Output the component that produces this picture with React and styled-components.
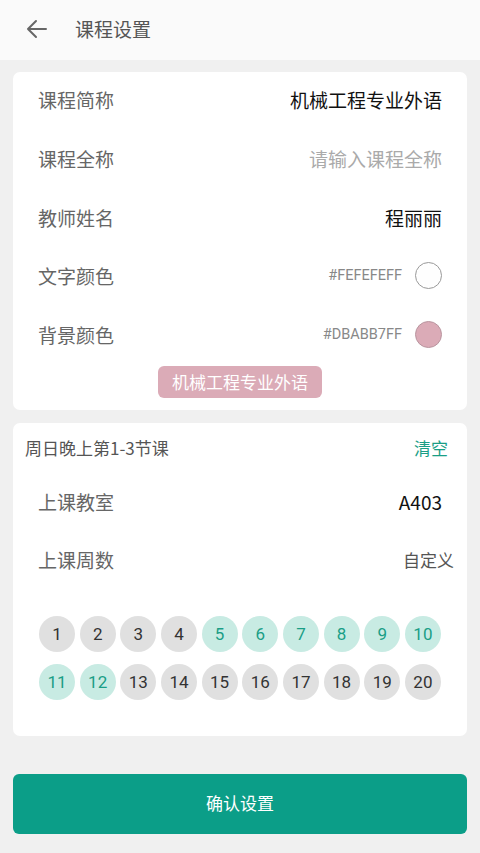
import React from "react";
import styled, { createGlobalStyle } from "styled-components";

const GlobalStyle = createGlobalStyle`
  html, body {
    margin: 0;
    padding: 0;
    background: #f0f0f0;
    font-family: "Noto Sans CJK SC", "Noto Sans", Roboto, sans-serif;
  }
  * { box-sizing: border-box; }
`;

const Page = styled.div`
  width: 480px;
  height: 853px;
  background: #f0f0f0;
  display: flex;
  flex-direction: column;
`;

const Header = styled.div`
  height: 60px;
  background: #fafafa;
  display: flex;
  align-items: center;
  padding: 0 0 3px 25px;
  gap: 26px;
`;

const Title = styled.div`
  font-size: 19px;
  color: #555;
`;

const Card = styled.div`
  margin: ${(p) => p.$margin};
  background: #fff;
  border-radius: 7px;
  padding: ${(p) => p.$padding};
  display: flex;
  flex-direction: column;
`;

const Row = styled.div`
  height: 58.7px;
  display: flex;
  align-items: center;
  justify-content: space-between;
  padding: 0 25px 3px;
`;

const Label = styled.div`
  font-size: 19px;
  color: #666;
`;

const Value = styled.div`
  font-size: ${(p) => p.$size || 19}px;
  color: ${(p) => p.$color || "#111"};
  margin-right: ${(p) => p.$shift || 0}px;
`;

const ColorPick = styled.div`
  display: flex;
  align-items: center;
  gap: 13px;
`;

const Hex = styled.span`
  font-family: Roboto, "Noto Sans", sans-serif;
  font-size: 14.5px;
  color: #888;
`;

const Swatch = styled.span`
  width: 27px;
  height: 27px;
  border-radius: 50%;
  background: ${(p) => p.$color};
  border: 1.5px solid ${(p) => p.$border};
`;

const TagWrap = styled.div`
  display: flex;
  justify-content: center;
  padding: 1px 0 0;
`;

const Tag = styled.div`
  background: #dbabb7;
  color: #fff;
  font-size: 17px;
  border-radius: 6px;
  height: 32px;
  padding: 0 14px 2px;
  display: flex;
  align-items: center;
`;

const SlotHead = styled.div`
  display: flex;
  align-items: center;
  justify-content: space-between;
  height: 50px;
  padding: 0 19px 2px 12px;
`;

const SlotTitle = styled.div`
  font-size: 17px;
  color: #555;
`;

const Clear = styled.div`
  font-size: 17px;
  color: #1a9e86;
`;

const Weeks = styled.div`
  display: grid;
  grid-template-columns: repeat(10, 36px);
  justify-content: space-between;
  row-gap: 12px;
  padding: 0 26px;
  margin-top: 25px;
`;

const Week = styled.div`
  width: 36px;
  height: 36px;
  border-radius: 50%;
  display: flex;
  align-items: center;
  justify-content: center;
  font-family: Roboto, "Noto Sans", sans-serif;
  font-size: 17px;
  background: ${(p) => (p.$on ? "#c8ebe3" : "#e0e0e0")};
  color: ${(p) => (p.$on ? "#1a9e86" : "#333")};
`;

const Confirm = styled.button`
  margin: 38px 13px 0;
  height: 60px;
  border: none;
  border-radius: 6px;
  background: #0b9e88;
  color: #fff;
  font-family: "Noto Sans CJK SC", sans-serif;
  font-size: 17px;
  padding-bottom: 3px;
`;

const selected = [5, 6, 7, 8, 9, 10, 11, 12];

export default function App() {
  return (
    <Page>
      <GlobalStyle />
      <Header>
        <svg width="24" height="24" viewBox="0 0 24 24" fill="none" stroke="#666" strokeWidth="2" strokeLinecap="round" strokeLinejoin="round">
          <path d="M21 12H3M11 4l-8 8 8 8" />
        </svg>
        <Title>课程设置</Title>
      </Header>

      <Card $margin="12px 13px 0" $padding="0 0 12px">
        <Row>
          <Label>课程简称</Label>
          <Value>机械工程专业外语</Value>
        </Row>
        <Row>
          <Label>课程全称</Label>
          <Value $color="#aaa">请输入课程全称</Value>
        </Row>
        <Row>
          <Label>教师姓名</Label>
          <Value>程丽丽</Value>
        </Row>
        <Row>
          <Label>文字颜色</Label>
          <ColorPick>
            <Hex>#FEFEFEFF</Hex>
            <Swatch $color="#fefefe" $border="#999" />
          </ColorPick>
        </Row>
        <Row>
          <Label>背景颜色</Label>
          <ColorPick>
            <Hex>#DBABB7FF</Hex>
            <Swatch $color="#dbabb7" $border="#b9959f" />
          </ColorPick>
        </Row>
        <TagWrap>
          <Tag>机械工程专业外语</Tag>
        </TagWrap>
      </Card>

      <Card $margin="13px 13px 0" $padding="0 0 36px">
        <SlotHead>
          <SlotTitle>周日晚上第1-3节课</SlotTitle>
          <Clear>清空</Clear>
        </SlotHead>
        <Row>
          <Label>上课教室</Label>
          <Value>A403</Value>
        </Row>
        <Row>
          <Label>上课周数</Label>
          <Value $size={17} $color="#555" $shift={-12}>自定义</Value>
        </Row>
        <Weeks>
          {Array.from({ length: 20 }, (_, i) => i + 1).map((n) => (
            <Week key={n} $on={selected.includes(n)}>{n}</Week>
          ))}
        </Weeks>
      </Card>

      <Confirm>确认设置</Confirm>
    </Page>
  );
}
